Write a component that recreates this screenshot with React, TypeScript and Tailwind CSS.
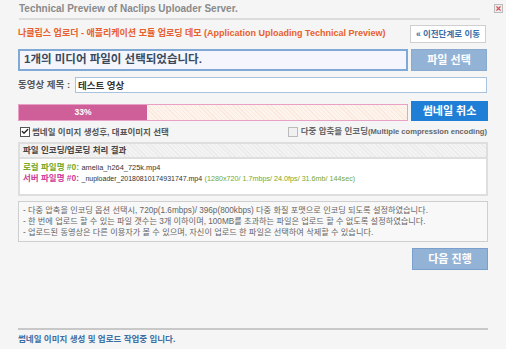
import { Check, X } from 'lucide-react'

const font = { fontFamily: '"Liberation Sans", "Noto Sans CJK KR", sans-serif' }

export default function App() {
	return (
		<div className="w-[506px] h-[351px] bg-[#f5f5f5] text-[11px] text-[#333] overflow-hidden flex flex-col whitespace-nowrap" style={font}>
			<TitleBar />
			<div className="flex-1 flex flex-col px-[18px]">
				<Header />
				<FileRow />
				<TitleRow />
				<ProgressRow percent={33} />
				<OptionRow />
				<ResultPanel />
				<NotesPanel />
				<div className="flex justify-end mt-[6px]">
					<button className="w-[76px] h-[22px] bg-[#93b3d6] border border-[#7a9fcc] text-white text-[11px] font-bold">
						다음 진행
					</button>
				</div>
				<div className="flex-1" />
				<div className="border-t-2 border-[#c8c8c8] pt-[3px] pb-[4px] leading-[12px] text-[#3a6ea5] text-[8.5px] font-bold">
					썸네일 이미지 생성 및 업로드 작업중 입니다.
				</div>
			</div>
			<div className="h-[2px] bg-white" />
		</div>
	)
}

function TitleBar() {
	return (
		<div className="flex items-center justify-between pl-[19px] pr-[3px] pt-[3px]">
			<div className="flex-1 border-b-2 border-[#dcdcdc] pb-[3px] mr-[14px] leading-[12px] text-[10px] font-bold text-[#8a8a8a]">
				Technical Preview of Naclips Uploader Server.
			</div>
			<div className="w-[9px] h-[9px] border border-[#bbb] bg-[#eee] flex items-center justify-center -mt-[6px]">
				<X size={7} strokeWidth={4} className="text-[#d9505a]" />
			</div>
		</div>
	)
}

function Header() {
	return (
		<div className="flex items-center justify-between mt-[5px]">
			<div className="text-[#e8602c] text-[9px] font-bold">
				나클립스 업로더 - 애플리케이션 모듈 업로딩 데모 (Application Uploading Technical Preview)
			</div>
			<button className="w-[76px] h-[18px] bg-white border border-[#cfcfcf] text-[#3a6ea5] text-[8.5px] font-bold mr-[2px]">
				« 이전단계로 이동
			</button>
		</div>
	)
}

function FileRow() {
	return (
		<div className="flex gap-[3px] mt-[6px]">
			<div className="w-[390px] h-[22px] bg-[#f4f5fd] border-2 border-[#80a9d6] flex items-center px-[4px] text-[11.5px] font-bold text-[#3a4a5c]">
				1개의 미디어 파일이 선택되었습니다.
			</div>
			<button className="w-[76px] h-[22px] bg-[#93b3d6] border border-[#8aaad0] text-white text-[11px] font-bold">
				파일 선택
			</button>
		</div>
	)
}

function TitleRow() {
	return (
		<div className="flex items-center mt-[6px]">
			<span className="w-[57px] text-[9.5px] font-bold text-[#555]">동영상 제목 :</span>
			<input
				type="text"
				defaultValue="테스트 영상"
				className="flex-1 h-[16px] bg-white border border-[#a9c3df] px-[2px] text-[9.5px] font-bold text-[#333] outline-none mr-[1px]"
				style={font}
			/>
		</div>
	)
}

function ProgressRow({ percent }: { percent: number }) {
	return (
		<div className="flex gap-[3px] mt-[8px]">
			<div className="w-[390px] h-[17px] mt-[3px] border border-[#e8a0c4] bg-[repeating-linear-gradient(45deg,#fdf4ee_0px,#fdf4ee_2px,#fbe9de_2px,#fbe9de_3px)] flex">
				<div
					className="h-full bg-[#cf5f99] text-white text-[8.5px] font-bold flex items-center justify-center"
					style={{ width: `${percent}%` }}
				>
					{percent}%
				</div>
			</div>
			<button className="w-[77px] h-[20px] bg-[#1f7fd6] text-white text-[11px] font-bold">썸네일 취소</button>
		</div>
	)
}

function OptionRow() {
	return (
		<div className="flex items-center justify-between mt-[4px] leading-[12px] text-[8.5px] font-bold text-[#555]">
			<label className="flex items-center gap-[2px] ml-[2px]">
				<span className="w-[10px] h-[10px] border border-[#555] bg-white flex items-center justify-center">
					<Check size={9} strokeWidth={4} className="text-[#222]" />
				</span>
				썸네일 이미지 생성후, 대표이미지 선택
			</label>
			<label className="flex items-center gap-[3px] text-[#666] mr-[1px]">
				<span className="w-[10px] h-[10px] border border-[#bbb] bg-[#f0f0f0]" />
				<span>
					다중 압축을 인코딩<span className="text-[7.6px]">(Multiple compression encoding)</span>
				</span>
			</label>
		</div>
	)
}

function ResultPanel() {
	return (
		<div className="mt-[4px] border-2 border-[#dedede] bg-white">
			<div className="h-[15px] bg-[repeating-linear-gradient(45deg,#f3f3f3_0px,#f3f3f3_2px,#ebebeb_2px,#ebebeb_3px)] border-b-2 border-[#dedede] flex items-center px-[3px] text-[8.5px] font-bold text-[#444]">
				파일 인코딩/업로딩 처리 결과
			</div>
			<div className="h-[35px] px-[3px] pt-[3px] text-[8.5px] leading-[11px] text-[#333]">
				<div>
					<span className="text-[#77a82a] font-bold">로컬 파일명 #0:</span>{' '}
					<span className="text-[7.4px]">amelia_h264_725k.mp4</span>
				</div>
				<div>
					<span className="text-[#d0409a] font-bold">서버 파일명 #0:</span>{' '}
					<span className="text-[7px]">_nuploader_20180810174931747.mp4</span>{' '}
					<span className="text-[#77a82a] text-[7.2px]">(1280x720/ 1.7mbps/ 24.0fps/ 31.6mb/ 144sec)</span>
				</div>
			</div>
		</div>
	)
}

function NotesPanel() {
	return (
		<div className="mt-[5px] border border-[#cfcfcf] bg-[#f8f8f8] px-[4px] py-[3px] text-[8.2px] leading-[11px] text-[#666]">
			<div>- 다중 압축을 인코딩 옵션 선택시, 720p(1.6mbps)/ 396p(800kbps) 다중 화질 포맷으로 인코딩 되도록 설정하였습니다.</div>
			<div>- 한 번에 업로드 할 수 있는 파일 갯수는 3개 이하이며, 100MB를 초과하는 파일은 업로드 할 수 없도록 설정하였습니다.</div>
			<div>- 업로드된 동영상은 다른 이용자가 볼 수 있으며, 자신이 업로드 한 파일은 선택하여 삭제할 수 있습니다.</div>
		</div>
	)
}
